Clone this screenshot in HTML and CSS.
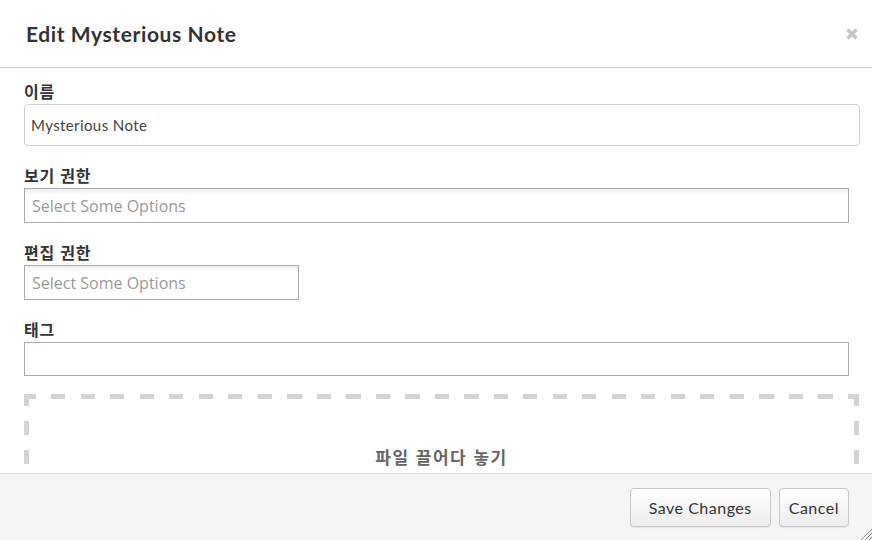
FILE: index.html
```html
<!DOCTYPE html>
<html lang="ko">
<head>
<meta charset="utf-8">
<link rel="stylesheet" href="styles.css">
</head>
<body>
<div class="modal">
  <div class="modal-header">
    <h3 class="title">Edit Mysterious Note</h3>
    <span class="close" aria-label="close">
      <svg width="12" height="12" viewBox="0 0 12 12"><path d="M1.5 1.5 L10.5 10.5 M10.5 1.5 L1.5 10.5" stroke="#c6c6c6" stroke-width="3.4" stroke-linecap="butt"/></svg>
    </span>
  </div>
  <div class="modal-body">
    <div class="field">
      <label class="label">이름</label>
      <div class="text-input">Mysterious Note</div>
    </div>
    <div class="field">
      <label class="label">보기 권한</label>
      <div class="chosen wide"><span class="placeholder">Select Some Options</span></div>
    </div>
    <div class="field">
      <label class="label">편집 권한</label>
      <div class="chosen narrow"><span class="placeholder">Select Some Options</span></div>
    </div>
    <div class="field">
      <label class="label">태그</label>
      <div class="tag-input"></div>
    </div>
    <div class="dropzone">
      <div class="drop-text">파일 끌어다 놓기</div>
    </div>
  </div>
  <div class="modal-footer">
    <button class="btn">Save Changes</button>
    <button class="btn">Cancel</button>
    <svg class="resize" width="12" height="12" viewBox="0 0 12 12"><path d="M12 1 L1 12 M12 5 L5 12 M12 9 L9 12" stroke="#8a8a8a" stroke-width="1"/></svg>
  </div>
</div>
</body>
</html>
```
FILE: styles.css
```css
html, body {
  margin: 0;
  padding: 0;
  background: #ffffff;
}
.modal {
  position: relative;
  width: 872px;
  height: 540px;
  display: flex;
  flex-direction: column;
  overflow: hidden;
  font-family: "Lato", "Noto Sans CJK KR", sans-serif;
  color: #333;
}
.modal-header {
  height: 68px;
  box-sizing: border-box;
  border-bottom: 1px solid #cfcfcf;
  display: flex;
  align-items: center;
  justify-content: space-between;
  padding: 0 14px 0 26px;
  flex-shrink: 0;
}
.title {
  margin: 0;
  font-size: 21px;
  font-weight: 700;
  color: #333;
  letter-spacing: 0.6px;
}
.close {
  display: flex;
  margin-top: 1px;
}
.modal-body {
  flex: 1;
  overflow: hidden;
  padding: 13px 12px 0 24px;
}
.field {
  margin-bottom: 19px;
}
.label {
  display: block;
  font-family: "Noto Sans CJK KR", sans-serif;
  font-weight: 700;
  font-size: 16px;
  letter-spacing: 0.8px;
  line-height: 20px;
  color: #333;
  margin-bottom: 3px;
}
.text-input {
  box-sizing: border-box;
  width: 836px;
  height: 42px;
  border: 1px solid #cfcfcf;
  border-radius: 4px;
  padding: 0 6px;
  display: flex;
  align-items: center;
  font-size: 15px;
  letter-spacing: 0.4px;
  color: #444;
  font-family: "Lato", sans-serif;
}
.chosen {
  box-sizing: border-box;
  height: 35px;
  border: 1px solid #aaa;
  background: linear-gradient(#eeeeee 0, #ffffff 6px, #ffffff 100%);
  display: flex;
  align-items: center;
  padding: 0 7px;
}
.wide { width: 825px; }
.narrow { width: 275px; }
.placeholder {
  font-family: "Open Sans", sans-serif;
  font-size: 16px;
  color: #999;
}
.tag-input {
  box-sizing: border-box;
  width: 825px;
  height: 34px;
  border: 1px solid #aaa;
}
.dropzone {
  width: 835px;
  height: 160px;
  box-sizing: border-box;
  margin-top: -1px;
  padding-top: 50px;
  background:
    repeating-linear-gradient(90deg, #d3d3d3 0 14px, transparent 14px 29.5px) -2px 0 / 100% 5px no-repeat,
    repeating-linear-gradient(180deg, #d3d3d3 0 14px, transparent 14px 29px) 0 -2px / 5px 100% no-repeat,
    repeating-linear-gradient(180deg, #d3d3d3 0 14px, transparent 14px 29px) 100% -2px / 5px 100% no-repeat;
}
.drop-text {
  text-align: center;
  font-family: "Noto Sans CJK KR", sans-serif;
  font-weight: 700;
  font-size: 17px;
  letter-spacing: 1.5px;
  color: #666;
}
.modal-footer {
  position: relative;
  height: 67px;
  box-sizing: border-box;
  flex-shrink: 0;
  border-top: 1px solid #dcdcdc;
  background: #f5f5f5;
  display: flex;
  justify-content: flex-end;
  align-items: flex-start;
  gap: 8px;
  padding: 14px 23px 0 0;
}
.btn {
  height: 39px;
  box-sizing: border-box;
  border: 1px solid #c8c8c8;
  border-radius: 4px;
  background: linear-gradient(#ffffff, #ececec);
  box-shadow: 0 1px 1px rgba(0,0,0,0.08);
  font-family: "Lato", sans-serif;
  font-size: 16px;
  letter-spacing: 0.5px;
  color: #333;
  padding: 0 18px;
}
.btn + .btn { padding: 0 9px; }
.resize {
  position: absolute;
  right: 0;
  bottom: 0;
}
```
